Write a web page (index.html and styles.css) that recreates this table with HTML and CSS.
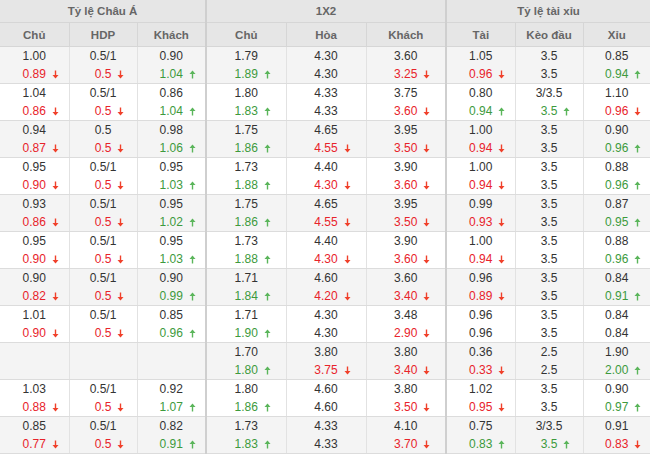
FILE: index.html
```html
<!DOCTYPE html>
<html>
<head>
<meta charset="utf-8">
<link rel="stylesheet" href="styles.css">
</head>
<body>
<table class="odds">
  <colgroup>
    <col class="c69"><col class="c68"><col class="c69">
    <col class="c80"><col class="c80"><col class="c80">
    <col class="c69"><col class="c68"><col class="c67">
  </colgroup>
  <thead>
    <tr class="h1">
      <th colspan="3" class="sec-end">Tỷ lệ Châu Á</th>
      <th colspan="3" class="sec-end">1X2</th>
      <th colspan="3">Tỷ lệ tài xỉu</th>
    </tr>
    <tr class="h2">
      <th>Chủ</th><th>HDP</th><th class="sec-end">Khách</th>
      <th>Chủ</th><th>Hòa</th><th class="sec-end">Khách</th>
      <th>Tài</th><th>Kèo đầu</th><th>Xỉu</th>
    </tr>
  </thead>
  <tbody id="rows">
  </tbody>
</table>
<script src="app.js"></script>
</body>
</html>
```

FILE: app.js
```js
// each cell: [top, bottom, trend]  trend: "d" red down, "u" green up, "" none
const data = [
  [["1.00","0.89","d"],["0.5/1","0.5","d"],["0.90","1.04","u"],["1.79","1.89","u"],["4.30","4.30",""],["3.60","3.25","d"],["1.05","0.96","d"],["3.5","3.5",""],["0.85","0.94","u"]],
  [["1.04","0.86","d"],["0.5/1","0.5","d"],["0.86","1.04","u"],["1.80","1.83","u"],["4.33","4.33",""],["3.75","3.60","d"],["0.80","0.94","u"],["3/3.5","3.5","u"],["1.10","0.96","d"]],
  [["0.94","0.87","d"],["0.5","0.5","d"],["0.98","1.06","u"],["1.75","1.86","u"],["4.65","4.55","d"],["3.95","3.50","d"],["1.00","0.94","d"],["3.5","3.5",""],["0.90","0.96","u"]],
  [["0.95","0.90","d"],["0.5/1","0.5","d"],["0.95","1.03","u"],["1.73","1.88","u"],["4.40","4.30","d"],["3.90","3.60","d"],["1.00","0.94","d"],["3.5","3.5",""],["0.88","0.96","u"]],
  [["0.93","0.86","d"],["0.5/1","0.5","d"],["0.95","1.02","u"],["1.75","1.86","u"],["4.65","4.55","d"],["3.95","3.50","d"],["0.99","0.93","d"],["3.5","3.5",""],["0.87","0.95","u"]],
  [["0.95","0.90","d"],["0.5/1","0.5","d"],["0.95","1.03","u"],["1.73","1.88","u"],["4.40","4.30","d"],["3.90","3.60","d"],["1.00","0.94","d"],["3.5","3.5",""],["0.88","0.96","u"]],
  [["0.90","0.82","d"],["0.5/1","0.5","d"],["0.90","0.99","u"],["1.71","1.84","u"],["4.60","4.20","d"],["3.60","3.40","d"],["0.96","0.89","d"],["3.5","3.5",""],["0.84","0.91","u"]],
  [["1.01","0.90","d"],["0.5/1","0.5","d"],["0.85","0.96","u"],["1.71","1.90","u"],["4.30","4.30",""],["3.48","2.90","d"],["0.96","0.96",""],["3.5","3.5",""],["0.84","0.84",""]],
  [null,null,null,["1.70","1.80","u"],["3.80","3.75","d"],["3.80","3.40","d"],["0.36","0.33","d"],["2.5","2.5",""],["1.90","2.00","u"]],
  [["1.03","0.88","d"],["0.5/1","0.5","d"],["0.92","1.07","u"],["1.80","1.86","u"],["4.60","4.60",""],["3.80","3.50","d"],["1.02","0.95","d"],["3.5","3.5",""],["0.90","0.97","u"]],
  [["0.85","0.77","d"],["0.5/1","0.5","d"],["0.82","0.91","u"],["1.73","1.83","u"],["4.33","4.33",""],["4.10","3.70","d"],["0.75","0.83","u"],["3/3.5","3.5","u"],["0.91","0.83","d"]]
];

const down = '<svg class="arr" width="7" height="9" viewBox="0 0 7 9"><path d="M3.5 0.5V6.5" stroke="#f0402a" stroke-width="1.4"/><path d="M0.5 5H6.5L3.5 8.5Z" fill="#f0402a"/></svg>';
const up = '<svg class="arr" width="7" height="9" viewBox="0 0 7 9"><path d="M3.5 2.5V8.5" stroke="#5ab55a" stroke-width="1.4"/><path d="M0.5 4H6.5L3.5 0.5Z" fill="#5ab55a"/></svg>';

const tbody = document.getElementById('rows');
let html = '';
data.forEach((row) => {
  html += '<tr>';
  row.forEach((c, i) => {
    const cls = (i === 2 || i === 5) ? ' class="sec-end"' : '';
    if (!c) { html += '<td' + cls + '></td>'; return; }
    const t = c[2];
    const col = t === 'd' ? 'red' : t === 'u' ? 'green' : '';
    const arrow = t === 'd' ? down : t === 'u' ? up : '';
    html += '<td' + cls + '><div class="v">' + c[0] + '</div>' +
      '<div class="v2"><span></span><span class="' + col + '">' + c[1] + '</span><span class="tr">' + arrow + '</span></div></td>';
  });
  html += '</tr>';
});
tbody.innerHTML = html;
```

FILE: styles.css
```css
html, body {
  margin: 0;
  padding: 0;
  background: #ffffff;
}
body {
  font-family: "Liberation Sans", Arial, sans-serif;
  font-size: 12px;
  color: #333333;
}
.odds {
  width: 650px;
  table-layout: fixed;
  border-collapse: collapse;
}
.c69 { width: 69px; }
.c68 { width: 68px; }
.c67 { width: 67px; }
.c80 { width: 80px; }

.odds th {
  background: #e6e6e6;
  color: #666666;
  font-weight: bold;
  font-size: 11.5px;
  text-align: center;
  padding: 0;
  border-right: 1px solid #d6d6d6;
  border-bottom: 1px solid #d6d6d6;
}
.h1 th { height: 22px; }
.h2 th { height: 23px; }

.odds td {
  height: 36px;
  padding: 0;
  text-align: center;
  vertical-align: middle;
  border-right: 1px solid #e2e2e2;
  border-bottom: 1px solid #dcdcdc;
}
.odds tbody tr:nth-child(odd) td { background: #f4f4f4; }
.odds tbody tr:nth-child(even) td { background: #ffffff; }

.odds th.sec-end,
.odds td.sec-end {
  border-right: 2px solid #cfcfcf;
}
.odds th:last-child,
.odds td:last-child { border-right: none; }

.v {
  line-height: 18px;
  white-space: nowrap;
}
.v2 {
  display: grid;
  grid-template-columns: 1fr auto 1fr;
  align-items: center;
  line-height: 18px;
  white-space: nowrap;
}
.red { color: #e8232b; }
.green { color: #3d9a3d; }
.tr {
  display: flex;
  justify-content: flex-start;
  padding-left: 6px;
}
.arr { display: block; }
```
